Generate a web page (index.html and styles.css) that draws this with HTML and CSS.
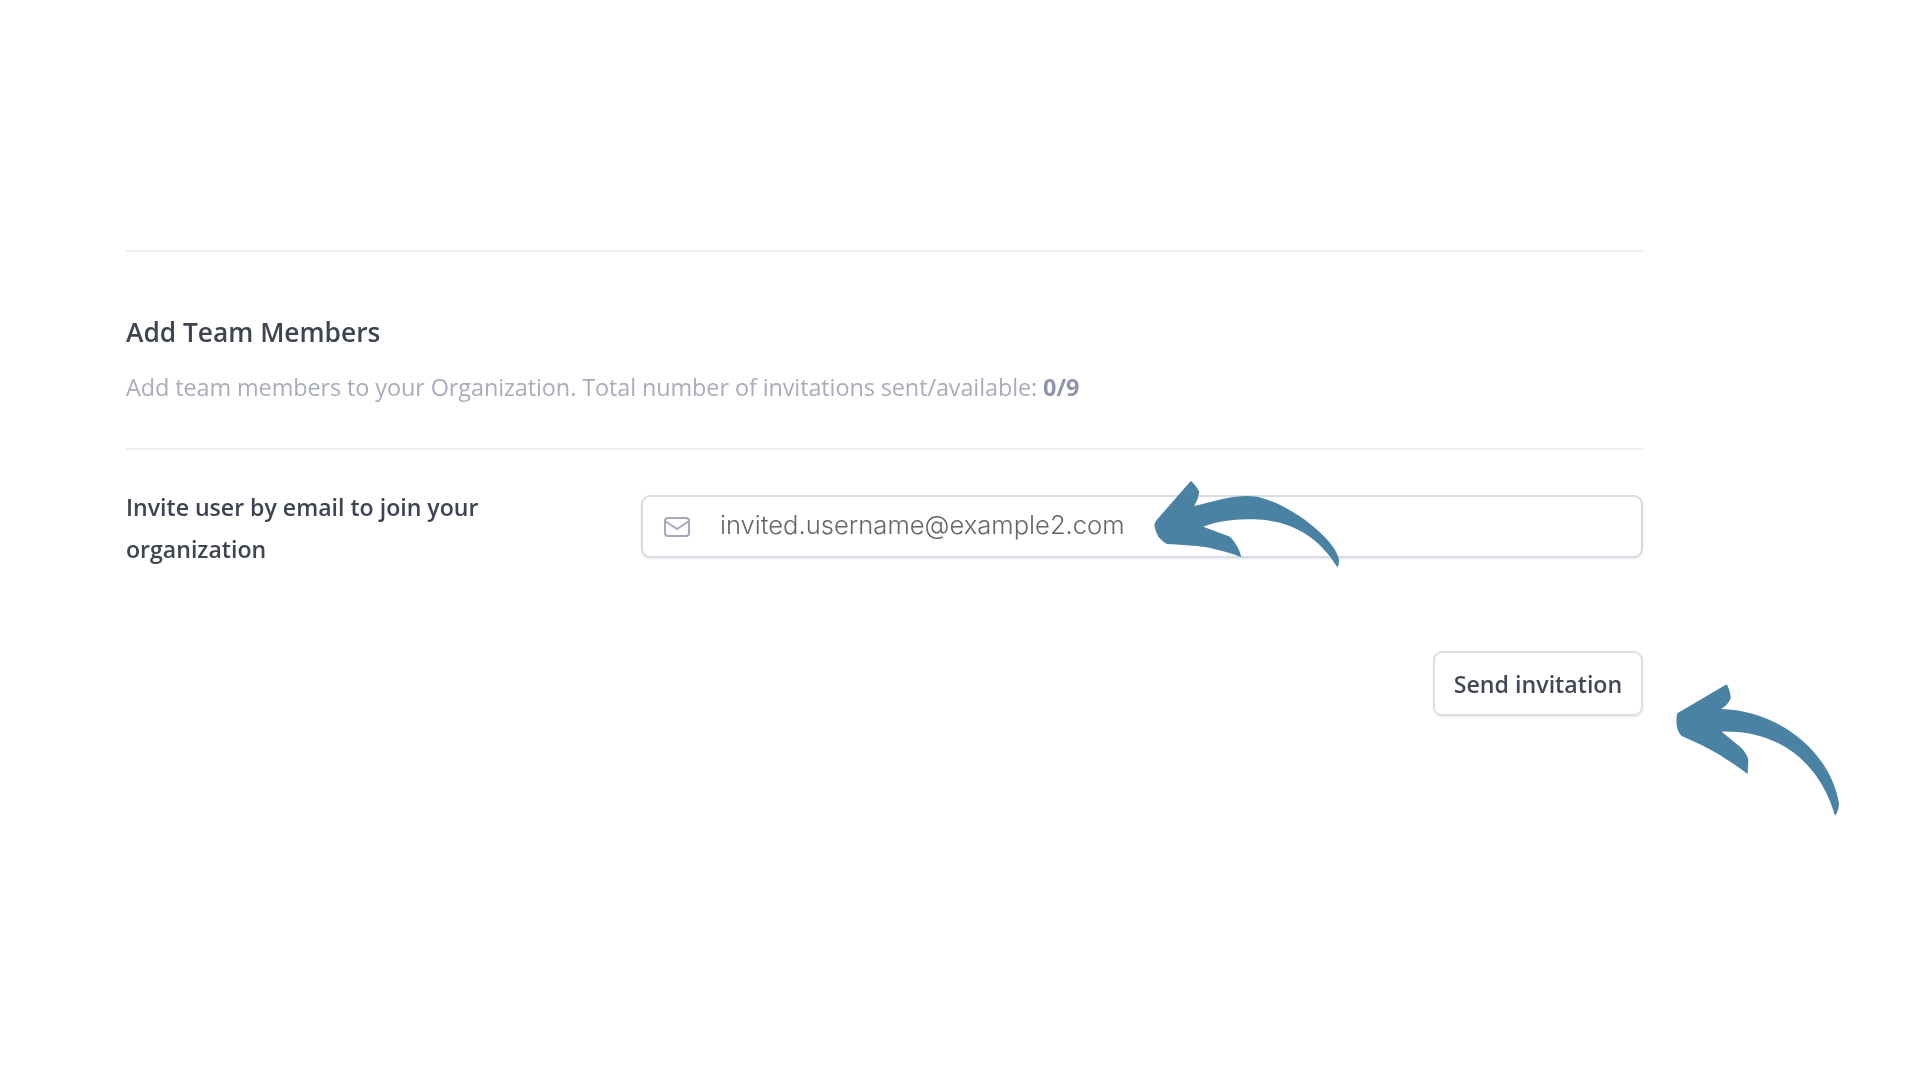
FILE: index.html
```html
<!DOCTYPE html>
<html lang="en">
<head>
<meta charset="utf-8">
<title>Add Team Members</title>
<link rel="stylesheet" href="styles.css">
</head>
<body>
<main class="page">
  <hr class="rule rule-top">
  <section class="intro">
    <h2 class="title">Add Team Members</h2>
    <p class="desc">Add team members to your Organization. Total number of invitations sent/available: <strong>0/9</strong></p>
  </section>
  <hr class="rule">
  <div class="row">
    <label class="label">Invite user by email to join your organization</label>
    <div class="input">
      <svg class="mail" viewBox="0 0 26 22" width="26" height="22" fill="none" stroke="#a3a9b8" stroke-width="2" stroke-linecap="round" stroke-linejoin="round"><rect x="1" y="2" width="24" height="18" rx="3"/><path d="M1.5 5.5 13 13l11.5-7.5"/></svg>
      <span class="value">invited.username@example2.com</span>
    </div>
  </div>
  <div class="actions"><button class="btn">Send invitation</button></div>
</main>
<svg class="arrow arrow-a" viewBox="0 0 660 330"><path d="M153 32Q170 48 178 65Q175 88 163 108C250 85 300 72 350 80C450 100 590 210 597 270Q598 285 592 292C530 190 440 150 340 148C280 146 230 155 190 170L270 200C285 215 300 240 304 262C270 248 235 240 200 232C160 226 120 224 80 222Q65 212 55 200Q45 182 43 165Q45 155 50 150Z"/></svg>
<svg class="arrow arrow-b" viewBox="0 0 1380 600"><path d="M980 163Q992 185 992 205Q985 225 963 237C1130 240 1290 360 1317 520Q1316 545 1305 557C1260 400 1140 300 965 305L1020 350Q1042 370 1045 390L1043 432C1015 410 985 392 960 375C925 355 885 335 845 318Q832 305 830 285Q828 265 832 250Z"/></svg>
</body>
</html>
```
FILE: styles.css
```css
* { box-sizing: border-box; }
html, body { margin: 0; background: #fff; }
body { height: 1080px; overflow: hidden; position: relative; font-family: "Open Sans", "Liberation Sans", sans-serif; }
.page { width: 1643px; padding: 250px 0 0 126px; filter: blur(0.35px); }
.rule { margin: 0; border: 0; border-top: 2px solid #eceef2; }
.intro { padding: 59px 0 42px; }
.title { margin: 0 0 15px; font-size: 26.3px; line-height: 42px; font-weight: 600; color: #3f4452; }
.desc { margin: 0; font-size: 23.45px; line-height: 38px; color: #a9adbb; letter-spacing: -0.1px; }
.desc strong { font-weight: 700; color: #8f94a6; }
.row { display: flex; align-items: flex-start; margin-top: 45px; }
.label { width: 515px; flex: none; padding-right: 130px; font-size: 23.1px; line-height: 42px; font-weight: 600; color: #3f4452; margin-top: -9px; }
.input { flex: 1; height: 63px; display: flex; align-items: center; gap: 30px; padding: 0 0 5px 21px; border: 2px solid #d8dbe3; border-radius: 9px; box-shadow: 0 1px 2px rgba(60,70,90,.12); }
.mail { flex: none; margin-top: 5px; }
.value { font-family: "Inter", "Liberation Sans", sans-serif; font-size: 25.6px; font-weight: 300; color: #666; }
.actions { display: flex; justify-content: flex-end; margin-top: 81px; }
.btn { height: 65px; width: 210px; background: #fff; border: 2px solid #dcdfe6; border-radius: 9px; box-shadow: 0 1px 2px rgba(60,70,90,.12); font: 600 23.2px "Open Sans", "Liberation Sans", sans-serif; color: #434857; }
.arrow { position: absolute; fill: #4a82a3; }
.arrow-a { left: 1140px; top: 470px; width: 220px; height: 110px; }
.arrow-b { left: 1400px; top: 630px; width: 460px; height: 200px; }
```
